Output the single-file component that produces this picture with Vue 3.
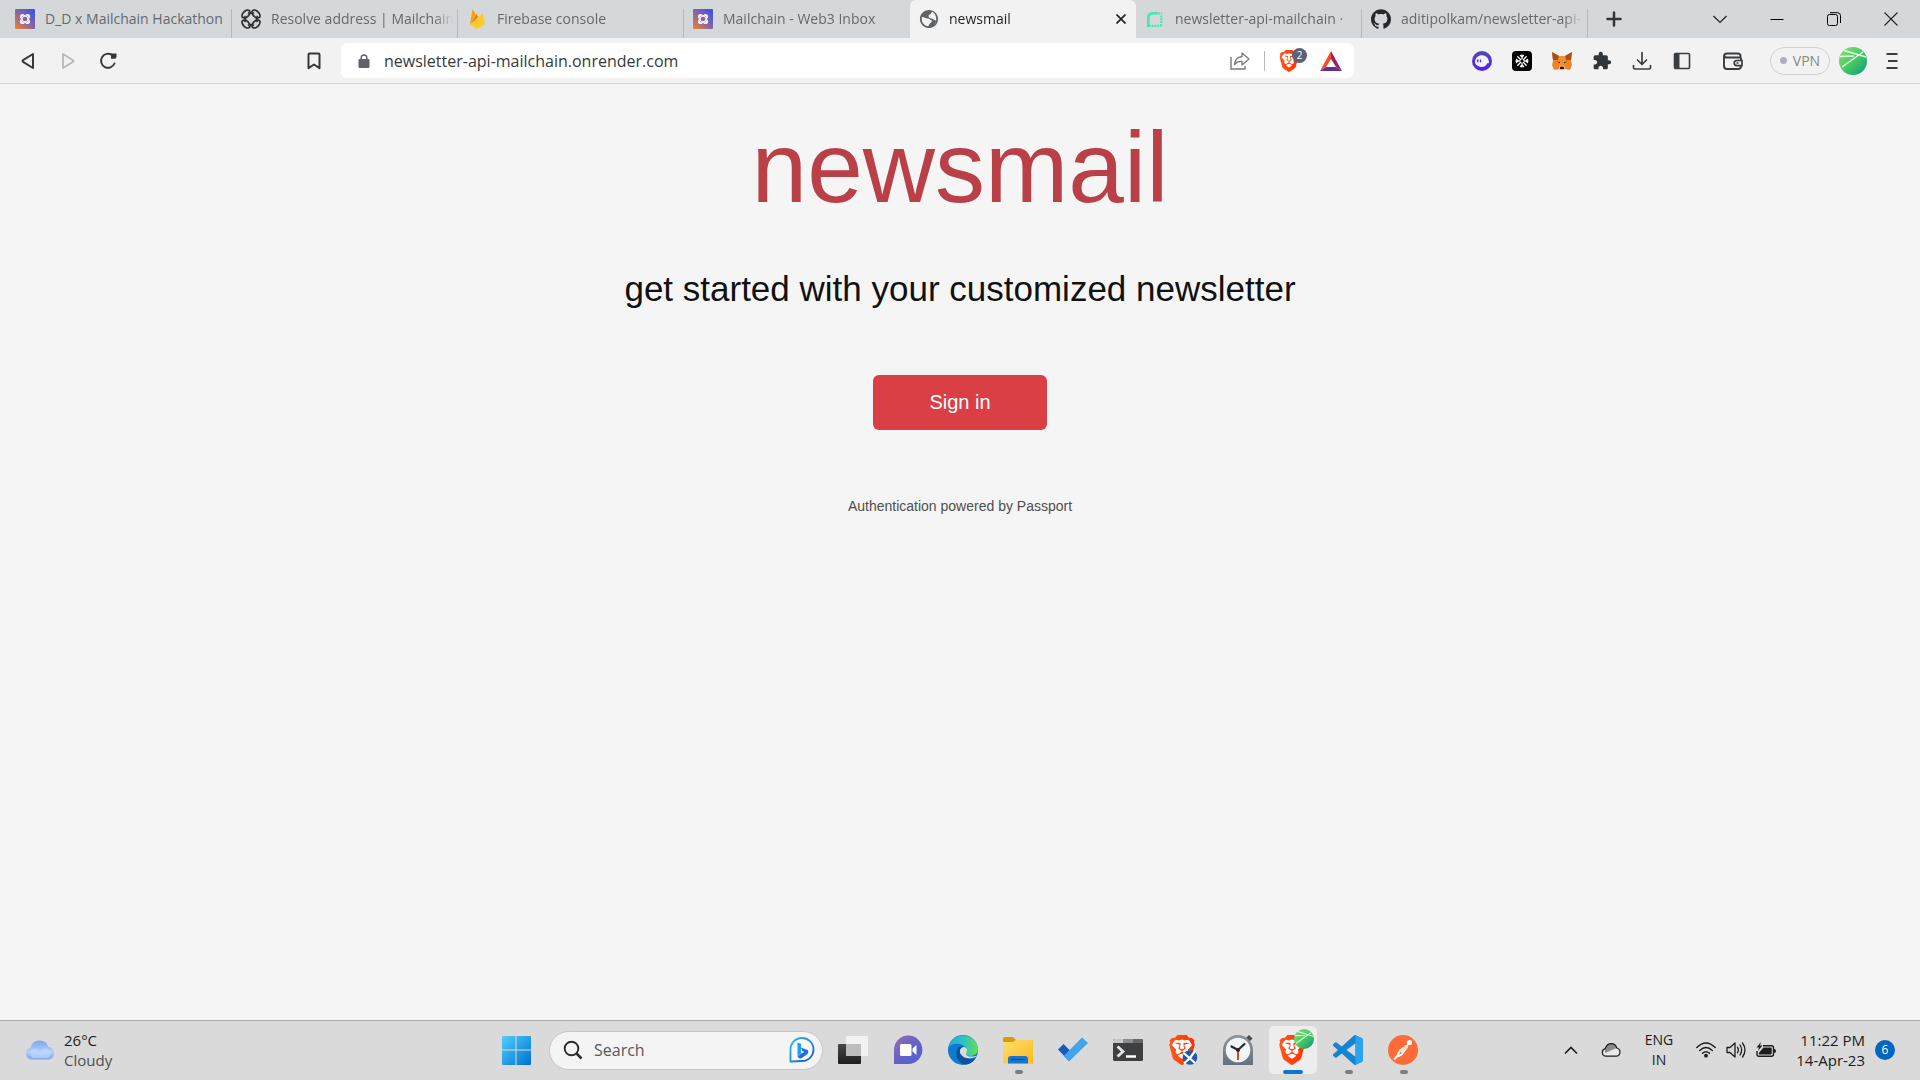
<script setup>
import { ref } from 'vue'

const tabs = [
  { title: 'D_D x Mailchain Hackathon', icon: 'mailchain' },
  { title: 'Resolve address | Mailchain', icon: 'knot' },
  { title: 'Firebase console', icon: 'firebase' },
  { title: 'Mailchain - Web3 Inbox', icon: 'mailchain' },
  { title: 'newsmail', icon: 'globe', active: true },
  { title: 'newsletter-api-mailchain ·', icon: 'render' },
  { title: 'aditipolkam/newsletter-api-', icon: 'github' },
]

const extensions = [
  { name: 'Phantom', icon: 'phantom' },
  { name: 'Keplr', icon: 'snow' },
  { name: 'MetaMask', icon: 'fox' },
  { name: 'Extensions', icon: 'puzzle' },
  { name: 'Downloads', icon: 'download' },
  { name: 'Sidebar', icon: 'sidebar' },
]

const apps = [
  { name: 'Task view', icon: 'taskview' },
  { name: 'Chat', icon: 'chat' },
  { name: 'Edge', icon: 'edge' },
  { name: 'File Explorer', icon: 'folder', open: true },
  { name: 'To Do', icon: 'todo' },
  { name: 'Terminal', icon: 'terminal' },
  { name: 'Brave work', icon: 'brave-work' },
  { name: 'Clock', icon: 'clock' },
  { name: 'Brave', icon: 'brave-user', current: true },
  { name: 'Visual Studio Code', icon: 'vscode', open: true },
  { name: 'Postman', icon: 'postman', open: true },
]

const address = ref('newsletter-api-mailchain.onrender.com')
const query = ref('')
</script>

<template>
  <div class="screen">
    <svg class="defs" aria-hidden="true">
      <defs>
        <linearGradient id="g-mail" x1="0" y1="1" x2="1" y2="0">
          <stop offset="0" stop-color="#f5812e" /><stop offset=".5" stop-color="#8566a0" /><stop offset="1" stop-color="#3450f0" />
        </linearGradient>
        <linearGradient id="g-brave" x1="0" y1="0" x2="1" y2="0">
          <stop offset="0" stop-color="#ff5a1f" /><stop offset="1" stop-color="#ff2f00" />
        </linearGradient>
        <linearGradient id="g-win" x1="0" y1="0" x2="1" y2="1">
          <stop offset="0" stop-color="#4fd0ff" /><stop offset="1" stop-color="#0070d0" />
        </linearGradient>
        <linearGradient id="g-cloud" x1="0" y1="0" x2="0" y2="1">
          <stop offset="0" stop-color="#79a5ee" /><stop offset=".6" stop-color="#b5d0fa" /><stop offset="1" stop-color="#7ba6ee" />
        </linearGradient>
        <linearGradient id="g-green" x1="0" y1="0" x2="1" y2="1">
          <stop offset="0" stop-color="#8fe07a" /><stop offset=".5" stop-color="#45cc62" /><stop offset="1" stop-color="#0c9384" />
        </linearGradient>
        <linearGradient id="g-phantom" x1="0" y1="0" x2="0" y2="1">
          <stop offset="0" stop-color="#534bb1" /><stop offset="1" stop-color="#551bf9" />
        </linearGradient>
        <linearGradient id="g-bing" x1="0" y1="0" x2="1" y2="1">
          <stop offset="0" stop-color="#25c5f0" /><stop offset="1" stop-color="#1d4fd0" />
        </linearGradient>
        <linearGradient id="g-chat" x1="0" y1="0" x2="1" y2="1">
          <stop offset="0" stop-color="#9a6bb0" /><stop offset=".5" stop-color="#6264c8" /><stop offset="1" stop-color="#5560d0" />
        </linearGradient>
        <linearGradient id="g-edge" x1="0" y1="0" x2="1" y2="0">
          <stop offset="0" stop-color="#2aa7dc" /><stop offset=".5" stop-color="#2bc3c8" /><stop offset="1" stop-color="#66e04c" />
        </linearGradient>
        <linearGradient id="g-folder" x1="0" y1="0" x2="1" y2="1">
          <stop offset="0" stop-color="#ffdd73" /><stop offset="1" stop-color="#fdbb17" />
        </linearGradient>
        <linearGradient id="g-dark" x1="0" y1="0" x2="0" y2="1">
          <stop offset="0" stop-color="#474747" /><stop offset="1" stop-color="#1e1e1e" />
        </linearGradient>
        <linearGradient id="g-clock" x1="0" y1="0" x2="0" y2="1">
          <stop offset="0" stop-color="#8b959e" /><stop offset="1" stop-color="#66717b" />
        </linearGradient>
      </defs>

      <symbol id="knot" viewBox="0 0 20 20">
        <g fill="none" stroke="currentColor" stroke-width="1.700">
          <ellipse cx="5" cy="5" rx="4.800" ry="2.900" transform="rotate(-45 5 5)" />
          <ellipse cx="15" cy="5" rx="4.800" ry="2.900" transform="rotate(45 15 5)" />
          <ellipse cx="5" cy="15" rx="4.800" ry="2.900" transform="rotate(45 5 15)" />
          <ellipse cx="15" cy="15" rx="4.800" ry="2.900" transform="rotate(-45 15 15)" />
          <path d="M7 3.500Q10 5.500 13 3.500M7 16.500Q10 14.500 13 16.500M3.500 7Q5.500 10 3.500 13M16.500 7Q14.500 10 16.500 13" />
        </g>
      </symbol>
      <symbol id="mailchain" viewBox="0 0 20 20">
        <rect width="20" height="20" rx="1" fill="url(#g-mail)" />
        <g fill="#f6eef8">
          <circle cx="7.500" cy="7.500" r="2.600" /><circle cx="12.500" cy="7.500" r="2.600" />
          <circle cx="7.500" cy="12.500" r="2.600" /><circle cx="12.500" cy="12.500" r="2.600" />
        </g>
        <circle cx="10" cy="10" r="3.300" fill="none" stroke="#f6eef8" stroke-width="1.200" />
        <circle cx="10" cy="10" r="2.300" fill="#8565a6" />
        <path d="M6.800 8.200l1.400-1.400M13.200 8.200l-1.400-1.400M6.800 11.800l1.400 1.400M13.200 11.800l-1.400 1.400" stroke="#a78bc0" stroke-width=".8" />
      </symbol>
      <symbol id="firebase" viewBox="0 0 20 20">
        <path d="M3 15.500L5.300.9q.3-.8.8-.1l2.400 4.500L3 15.500z" fill="#ffa000" />
        <path d="M11.500 8.700L9.500 4.700l-6.500 10.800 8.500-6.800z" fill="#f57c00" />
        <path d="M3 15.500l12-11q.6-.4.8.2l2.100 10.800-6.700 4q-1 .5-2 0L3 15.500z" fill="#ffca28" />
      </symbol>
      <symbol id="globe" viewBox="1 1 22 22">
        <path fill="#5f6368" d="M12 2C6.480 2 2 6.480 2 12s4.480 10 10 10 10-4.480 10-10S17.520 2 12 2zm-1 17.930c-3.950-.49-7-3.850-7-7.930 0-.62.08-1.210.21-1.790C6 9 8 12 11 11.500c2 0 2 2 4 2 1 2-2 3-3 5zm6.900-1.500c1-2 2-3 1.500-5-2 0-3-2-5-2-2-1-3-1-3-3 1-2 3-1 3.600-4.500C17.930 4.500 20 8.650 20 12c0 2.080-.8 4.970-2.100 6.430z" />
      </symbol>
      <symbol id="render" viewBox="0 0 20 20">
        <path d="M3.300 18V9q0-4.700 4.700-4.700h5" fill="none" stroke="#46e3b7" stroke-width="2.600" />
        <path d="M13.500 4.300H17M16.300 6.500V18M4 16.800h12" fill="none" stroke="#46e3b7" stroke-width="2.200" stroke-dasharray="1.800 1" />
      </symbol>
      <symbol id="github" viewBox="0 0 24 24">
        <path fill="#24292f" d="M12 .297c-6.630 0-12 5.373-12 12 0 5.303 3.438 9.800 8.205 11.385.6.113.82-.258.82-.577 0-.285-.01-1.040-.015-2.040-3.338.724-4.042-1.610-4.042-1.610C4.422 18.070 3.633 17.700 3.633 17.700c-1.087-.744.084-.729.084-.729 1.205.084 1.838 1.236 1.838 1.236 1.070 1.835 2.809 1.305 3.495.998.108-.776.417-1.305.76-1.605-2.665-.3-5.466-1.332-5.466-5.930 0-1.310.465-2.380 1.235-3.220-.135-.303-.54-1.523.105-3.176 0 0 1.005-.322 3.300 1.230.96-.267 1.980-.399 3-.405 1.020.006 2.040.138 3 .405 2.280-1.552 3.285-1.230 3.285-1.230.645 1.653.24 2.873.12 3.176.765.840 1.230 1.910 1.230 3.220 0 4.610-2.805 5.625-5.475 5.920.42.360.81 1.096.81 2.220 0 1.606-.015 2.896-.015 3.286 0 .315.21.69.825.57C20.565 22.092 24 17.592 24 12.297c0-6.627-5.373-12-12-12" />
      </symbol>
      <symbol id="close" viewBox="0 0 10 10"><path d="M.5.5l9 9M9.500.5l-9 9" fill="none" stroke="currentColor" stroke-width="1.700" /></symbol>
      <symbol id="plus" viewBox="0 0 16 16"><path d="M8 1.500v13M1.500 8h13" fill="none" stroke="#333638" stroke-width="2.500" stroke-linecap="round" /></symbol>
      <symbol id="down" viewBox="0 0 14 14"><path d="M.5 4L7 10.500 13.500 4" fill="none" stroke="#222" stroke-width="1.200" /></symbol>
      <symbol id="min" viewBox="0 0 14 14"><path d="M.5 7.500h13" stroke="#000" /></symbol>
      <symbol id="restore" viewBox="0 0 14 14">
        <rect x=".5" y="2.500" width="10" height="11" rx="2" fill="none" stroke="#000" />
        <path d="M3 .7h7.500q3 0 3 3V11" fill="none" stroke="#000" />
      </symbol>
      <symbol id="wclose" viewBox="0 0 14 14"><path d="M.5.5l13 13M13.500.5l-13 13" stroke="#222" stroke-width="1.100" /></symbol>

      <symbol id="back" viewBox="0 0 14 18"><path d="M12 2v14L2 9.800q-1-.8 0-1.600z" fill="none" stroke="currentColor" stroke-width="2" stroke-linejoin="round" /></symbol>
      <symbol id="forward" viewBox="0 0 14 18"><path d="M2 2v14l10-6.200q1-.8 0-1.600z" fill="none" stroke="currentColor" stroke-width="1.800" stroke-linejoin="round" /></symbol>
      <symbol id="reload" viewBox="0 0 18 18">
        <path d="M13 3a7 7 0 1 0 2.500 8.500" fill="none" stroke="currentColor" stroke-width="1.900" stroke-linecap="round" />
        <path d="M12 1.500h5.500v3.300q0 2-2 2H12z" fill="currentColor" />
      </symbol>
      <symbol id="bookmark" viewBox="0 0 14 18"><path d="M1.500 2.500q0-1 1-1h9q1 0 1 1v13.700L7 12.500l-5.500 3.700z" fill="none" stroke="currentColor" stroke-width="2" stroke-linejoin="round" /></symbol>
      <symbol id="lock" viewBox="0 0 12 14">
        <path d="M3.200 6V3.800a2.800 2.800 0 0 1 5.600 0V6" fill="none" stroke="#5f6368" stroke-width="1.500" />
        <rect x=".5" y="5" width="11" height="9" rx="1.300" fill="#5f6368" />
      </symbol>
      <symbol id="share" viewBox="0 0 20 18">
        <path d="M1 5v12h14v-3" fill="none" stroke="#77797c" stroke-width="1.400" />
        <path d="M12 1l7 6-7 6V9.500Q7 9 4.500 12.500 5 5.500 12 4.500z" fill="none" stroke="#77797c" stroke-width="1.300" stroke-linejoin="round" />
      </symbol>
      <symbol id="lion" viewBox="0 0 24 24">
        <path d="M5 4h14l1 5-3 9-5 3-5-3-3-9z" fill="#fff" />
        <path fill="url(#g-brave)" d="M15.680 0l2.096 2.380s1.840-.512 2.709.358c.868.870 1.584 1.638 1.584 1.638l-.562 1.381.715 2.047s-2.104 7.980-2.350 8.955c-.486 1.919-.818 2.660-2.198 3.633-1.380.972-3.884 2.660-4.293 2.916-.409.256-.92.692-1.380.692-.46 0-.97-.436-1.380-.692a185.796 185.796 0 01-4.293-2.916c-1.380-.973-1.712-1.714-2.197-3.633-.247-.975-2.351-8.955-2.351-8.955l.715-2.047-.562-1.381s.716-.768 1.585-1.638c.868-.870 2.708-.358 2.708-.358L8.321 0h7.360zm-3.679 14.936c-.14 0-1.038.317-1.758.690-.72.373-1.242.637-1.409.742-.167.104-.065.301.087.409.152.107 2.194 1.690 2.393 1.866.198.175.489.464.687.464.198 0 .49-.29.688-.464.198-.175 2.240-1.759 2.392-1.866.152-.108.254-.305.087-.41-.167-.104-.689-.368-1.410-.741-.72-.373-1.617-.69-1.757-.69zm0-11.278s-.409.001-1.022.206-1.278.460-1.584.460c-.307 0-2.581-.434-2.581-.434S4.119 7.152 4.119 7.849c0 .697.339.881.680 1.243l2.020 2.149c.192.203.590.511.356 1.066-.235.555-.58 1.260-.196 1.977.384.716 1.042 1.194 1.464 1.115.421-.08 1.412-.598 1.776-.834.364-.237 1.518-1.190 1.518-1.554 0-.365-1.193-1.020-1.413-1.168-.22-.15-1.226-.725-1.247-.95-.02-.227-.012-.293.284-.851.297-.559.831-1.304.742-1.800-.089-.495-.95-.753-1.565-.986-.615-.232-1.799-.671-1.947-.74-.148-.068-.11-.133.339-.175.448-.043 1.719-.212 2.292-.052.573.160 1.552.403 1.632.532.079.130.149.134.067.579-.081.445-.5 2.581-.541 2.960-.04.380-.12.630.288.724.409.094 1.097.256 1.333.256s.924-.162 1.333-.256c.408-.093.329-.344.288-.723-.04-.38-.46-2.516-.541-2.961-.082-.445-.012-.45.067-.579.080-.129 1.059-.372 1.632-.532.573-.16 1.845.009 2.292.052.449.042.487.107.339.175-.148.069-1.332.508-1.947.740-.615.233-1.476.490-1.565.986-.09.496.445 1.241.742 1.800.297.558.304.624.284.850-.02.226-1.026.802-1.247.950-.22.150-1.413.804-1.413 1.169 0 .364 1.154 1.317 1.518 1.554.364.236 1.355.755 1.776.834.422.079 1.080-.4 1.464-1.115.384-.716.039-1.422-.195-1.977-.235-.555.163-.863.355-1.066l2.020-2.149c.341-.362.680-.546.680-1.243 0-.697-2.695-3.960-2.695-3.960s-2.274.436-2.580.436c-.307 0-.972-.256-1.585-.461-.613-.205-1.022-.206-1.022-.206z" />
      </symbol>
      <symbol id="bat" viewBox="0 0 22 20">
        <path d="M11 0L0 20l6-4 5-8z" fill="#ff4724" />
        <path d="M11 0l11 20-6-4-5-8z" fill="#9e1f63" />
        <path d="M0 20h22l-6-4H6z" fill="#662d91" />
      </symbol>
      <symbol id="phantom" viewBox="0 0 20 20">
        <circle cx="10" cy="10" r="10" fill="url(#g-phantom)" />
        <path d="M3 11C3.300 6.500 6.500 4.200 10 4.200c4.200 0 6.800 3.300 7 6.800.1 1.300-.8 1.400-1.800 1.300-.7 2.700-3.400 4-6.200 3.700C5.500 15.500 3 13.500 3 11z" fill="#f3f0ff" />
        <path d="M5.700 8.500v2.800M8.500 8.500v2.800" stroke="#5137d5" stroke-width="1.400" />
      </symbol>
      <symbol id="snow" viewBox="0 0 20 20">
        <rect width="20" height="20" rx="4" />
        <g fill="none" stroke="#fff" stroke-width="1.300" stroke-linecap="round">
          <path d="M10 4v4M10 12v4M4 10h4M12 10h4M5.800 5.800l2.700 2.700M11.500 11.500l2.700 2.700M14.200 5.800l-2.700 2.700M8.500 11.500l-2.700 2.700M8.500 4.500L10 6l1.500-1.500M8.500 15.500L10 14l1.500 1.500M4.500 8.500L6 10l-1.500 1.500M15.500 8.500L14 10l1.500 1.500" />
        </g>
      </symbol>
      <symbol id="fox" viewBox="0 0 20 20">
        <path d="M0 1l7 4h6l7-4-1 9 1 4-2 5-5-1-2 1H9l-2-1-5 1-2-5 1-4z" fill="#f08327" />
        <path d="M0 1l7 4-1 4-5 0zM20 1l-7 4 1 4 5 0z" fill="#a5521a" />
        <path d="M7 5h6l1 5-1 5H7l-1-5z" fill="#f6902e" />
        <path d="M5 10.500l3 .5v1.500zM15 10.500l-3 .5v1.500z" fill="#233447" />
        <path d="M7 15l2 1h2l2-1v3l-2 1.500H9L7 18z" fill="#d8c5b5" /><path d="M8 16h4v2H8z" fill="#1c1715" />
      </symbol>
      <symbol id="puzzle" viewBox="0 0 24 24">
        <path fill="#333638" d="M20.500 11H19V7c0-1.100-.9-2-2-2h-4V3.500C13 2.120 11.880 1 10.500 1S8 2.120 8 3.500V5H4c-1.100 0-1.990.9-1.990 2v3.800H3.500c1.490 0 2.700 1.210 2.700 2.700s-1.210 2.700-2.700 2.700H2V20c0 1.100.9 2 2 2h3.800v-1.500c0-1.490 1.210-2.700 2.700-2.700 1.490 0 2.700 1.210 2.700 2.700V22H17c1.100 0 2-.9 2-2v-4h1.500c1.380 0 2.500-1.120 2.500-2.500S21.880 11 20.500 11z" />
      </symbol>
      <symbol id="download" viewBox="0 0 20 20">
        <path d="M10 1.500v11.500M5.500 9L10 13.500 14.500 9M1.500 14.500v2q0 1.500 1.500 1.500h14q1.500 0 1.500-1.500v-2" fill="none" stroke="#3a3d40" stroke-width="1.700" stroke-linecap="round" stroke-linejoin="round" />
      </symbol>
      <symbol id="sidebar" viewBox="0 0 20 20">
        <rect x="2.500" y="2.500" width="15" height="15" rx="1" fill="none" stroke="#3a3d40" stroke-width="1.600" /><path d="M2.500 2.500h5v15h-5z" fill="#3a3d40" />
      </symbol>
      <symbol id="wallet" viewBox="0 0 20 18">
        <path d="M17.500 6V4q0-2.500-2.500-2.500H4Q1 1.500 1 4v10q0 3 3 3h11q3 0 3-3V6.500q0-1-1-1H4Q1.500 5.500 1.200 3.500" fill="none" stroke="#3a3d40" stroke-width="1.900" />
        <path d="M19 8.500h-5q-2.800 0-2.800 2.600t2.800 2.600h5z" fill="#f2f2f2" stroke="#3a3d40" stroke-width="1.700" />
        <path d="M13.500 11h2" stroke="#3a3d40" stroke-width="1.500" />
      </symbol>
      <symbol id="avatar" viewBox="0 0 28 28">
        <circle cx="14" cy="14" r="14" fill="url(#g-green)" />
        <path d="M5 3.500l22 6.500M3 20L24 5M1 9.500L15 9" stroke="#e9fbea" stroke-width="1.500" fill="none" />
      </symbol>
      <symbol id="menu" viewBox="0 0 12 18"><path d="M.5 2h11M2 9h9.500M.5 16h11" stroke="#3a3d40" stroke-width="2" /></symbol>

      <symbol id="weather" viewBox="0 0 30 20">
        <path d="M6 19.500a6 6 0 0 1-.5-11.800Q7.500.5 14.500.5t8.800 6.300A6.400 6.400 0 0 1 24 19.500z" fill="url(#g-cloud)" />
        <path d="M8 18a5 5 0 0 1 0-9q5-1 7 4 3-6 8-4a5 5 0 0 1 0 9z" fill="#c3dafc" opacity=".6" />
      </symbol>
      <symbol id="windows" viewBox="0 0 30 30">
        <path d="M2 1h12.500v13.500H1V2q0-1 1-1zM15.500 1H29q1 0 1 1v12.500H15.500zM1 15.500h13.500V30H2q-1 0-1-1zM15.500 15.500H30V29q0 1-1 1H15.500z" fill="url(#g-win)" />
      </symbol>
      <symbol id="search" viewBox="0 0 20 20">
        <circle cx="8.500" cy="8.500" r="6.800" fill="none" stroke="#2b2b2b" stroke-width="1.900" /><path d="M13.500 13.500l5 5" stroke="#2b2b2b" stroke-width="2.500" />
      </symbol>
      <symbol id="bing" viewBox="0 0 26 26">
        <path d="M1.500 24.500V13A11.500 11.500 0 1 1 13 24z" fill="#f7fbff" stroke="url(#g-bing)" stroke-width="1.800" stroke-linejoin="round" />
        <path d="M8.500 5.500l3.500 1.300v9.500l-3.500 3z" fill="#1aa0ee" />
        <path d="M8.500 19.500l3.500-3 3.500-1.500-2.300-1-1.200-3.500 7 2.800q1 2.200-.7 4L12 21.500q-2.500 0-3.500-2z" fill="#2468e8" />
      </symbol>
      <symbol id="taskview" viewBox="0 0 30 30">
        <rect y="9" width="23" height="20" rx="1" fill="url(#g-dark)" />
        <rect x="8" y="1" width="22" height="20" rx="1" fill="#f2f2f2" />
        <rect x="8" y="9" width="15" height="12" fill="#bdbdbd" />
      </symbol>
      <symbol id="chat" viewBox="0 0 30 30">
        <path d="M1 29V15A14.200 14.200 0 1 1 15 29z" fill="url(#g-chat)" />
        <rect x="7" y="9" width="11.500" height="12" rx="1.500" fill="#fff" /><path d="M19.500 13.500l4-3.500v10l-4-3.500z" fill="#fff" />
      </symbol>
      <symbol id="edge" viewBox="0 0 30 30">
        <circle cx="15" cy="15" r="15" fill="#0c7bd0" />
        <path d="M.3 13A15 15 0 0 1 30 14c0 5-4 7-8 7-3 0-4.500-1-4-2.500 1.500-3 0-8-6-9.500C7 8 2 9 .3 13z" fill="url(#g-edge)" />
        <path d="M10 13c-4 6 0 17 9 16.400 4-.8 7-3.400 9-6.900-5 3-13 2-15-4-.7-3 .5-5.500 3-6.700-2-.6-4.500-.3-6 1.200z" fill="#104f9a" />
        <path d="M14.500 12.200c-3 1.500-3.200 5-1.500 7.300 3 4 9 5 14.500 2.500l1.400-1.400C26 22 20 22 18.500 20c-1.200-1.500 1-3 .5-5-.5-1.800-2-3.500-4.500-2.800z" fill="#dadada" />
      </symbol>
      <symbol id="folder" viewBox="0 0 30 30">
        <path d="M0 4q0-2 2-2h8l3 3h15q2 0 2 2v8H0z" fill="#dc9a06" />
        <path d="M0 7h10l3-2h15q2 0 2 2v21.500H0z" fill="url(#g-folder)" />
        <path d="M5 28.500V24q0-3 3-3h14q3 0 3 3v4.500z" fill="#1478d0" /><path d="M8 24.500h14" stroke="#094b91" stroke-width="1.300" />
      </symbol>
      <symbol id="todo" viewBox="0 0 30 30">
        <path d="M0 14.500L5.500 9l11 11-5.500 6z" fill="#185abd" /><path d="M11 26.500L5.700 21 24 2.500l6 5.500z" fill="#41a5ee" />
      </symbol>
      <symbol id="terminal" viewBox="0 0 30 30">
        <rect y="4" width="30" height="22" rx="1.500" fill="#3d3f41" /><path d="M0 8V5.500Q0 4 1.500 4H10v4z" fill="#c8c8c8" /><path d="M10 4h10v4H10z" fill="#8d8d8d" /><path d="M20 4h8.500Q30 4 30 5.500V8H20z" fill="#666" />
        <path d="M4.500 11.500l5.500 5-5.500 5" fill="none" stroke="#e4e4e4" stroke-width="2.800" /><path d="M13 21.500h10" stroke="#fff" stroke-width="2.500" />
      </symbol>
      <symbol id="brave-work" viewBox="0 0 30 30">
        <use href="#lion" x="-1" y="0" width="30" height="30" />
        <circle cx="22" cy="22.500" r="7.300" fill="#2459a8" /><path d="M15.500 18l6 5 5.500 5M16 28.500l6-5.500 5-7" stroke="#fff" stroke-width="2.200" fill="none" />
      </symbol>
      <symbol id="clock" viewBox="0 0 30 30">
        <path d="M23 3l3-3 3.500 3.500-3 3z" fill="#444d55" />
        <path d="M0 30V15a15 15 0 0 1 30 0v15z" fill="url(#g-clock)" />
        <circle cx="15" cy="15" r="12.300" fill="#f3f4f5" />
        <path d="M15 15v10" stroke="#da4b12" stroke-width="2" /><path d="M8.500 11.500L15 15l6.500-6" fill="none" stroke="#24292e" stroke-width="2.200" stroke-linecap="round" />
        <circle cx="15" cy="15" r="2" fill="#24292e" />
      </symbol>
      <symbol id="brave-user" viewBox="0 0 36 36">
        <use href="#lion" x="-1" y="6" width="30" height="30" />
        <use href="#avatar" x="16" y="0" width="20" height="20" />
      </symbol>
      <symbol id="vscode" viewBox="0 0 24 24">
        <path fill="#1585d2" d="M23.150 2.587L18.210.210a1.494 1.494 0 0 0-1.705.290l-9.460 8.630-4.120-3.128a.999.999 0 0 0-1.276.057L.327 7.261A1 1 0 0 0 .326 8.740L3.899 12 .326 15.260a1 1 0 0 0 .001 1.479L1.650 17.940a.999.999 0 0 0 1.276.057l4.120-3.128 9.460 8.630a1.492 1.492 0 0 0 1.704.290l4.942-2.377A1.500 1.500 0 0 0 24 20.060V3.939a1.500 1.500 0 0 0-.85-1.352zm-5.146 14.861L10.826 12l7.178-5.448v10.896z" />
        <path fill="#2ba3f0" d="M18 .1l5.150 2.487A1.500 1.500 0 0 1 24 3.939V20.060a1.500 1.500 0 0 1-.85 1.352L18 23.900z" />
      </symbol>
      <symbol id="postman" viewBox="0 0 30 30">
        <circle cx="15" cy="15" r="15" fill="#ff6c37" />
        <circle cx="21.500" cy="7.500" r="2.600" fill="#fff" />
        <path d="M20 10l-8 5.500-3 6-3 3M19.500 11.500l-6 8-3.500 2" fill="none" stroke="#fff" stroke-width="2" /><path d="M19 11l-6 6" stroke="#ffd8c8" stroke-width="3" />
      </symbol>
      <symbol id="up" viewBox="0 0 14 14"><path d="M1 10.500l6-6 6 6" fill="none" stroke="#1c1c1c" stroke-width="1.600" /></symbol>
      <symbol id="onedrive" viewBox="0 0 20 14">
        <path d="M4.500 13.200a3.900 3.900 0 0 1-.3-7.600Q6 .7 10.300.7t5.500 4.300a4.200 4.200 0 0 1-.3 8.200z" fill="#e9e9e9" />
        <path d="M4 5.800Q6 .7 10.300.7t5.500 4.300L4 10z" fill="#8b8b8b" />
        <path d="M4.500 13.200a3.900 3.900 0 0 1-.3-7.600Q6 .7 10.300.7t5.500 4.300a4.200 4.200 0 0 1-.3 8.200z" fill="none" stroke="#1c1c1c" stroke-width="1.200" />
      </symbol>
      <symbol id="wifi" viewBox="0 0 20 16">
        <g fill="none" stroke="#1c1c1c" stroke-width="1.400" stroke-linecap="round"><path d="M.8 5.500q9.200-9 18.400 0M3.700 8.500q6.300-6 12.600 0M6.500 11.300q3.500-3.300 7 0" /></g><circle cx="10" cy="13.700" r="1.900" fill="#1c1c1c" />
      </symbol>
      <symbol id="volume" viewBox="0 0 20 18">
        <g fill="none" stroke="#1c1c1c" stroke-width="1.300" stroke-linecap="round" stroke-linejoin="round"><path d="M1 6.500h3L9 2v14l-5-4.500H1zM11.500 6.300q1.800 2.700 0 5.400M14 4q3.200 5 0 10M16.500 2q5 7 0 14" /></g>
      </symbol>
      <symbol id="battery" viewBox="0 0 20 16">
        <path d="M7 3.700h8.500q2 0 2 2v6.600q0 2-2 2H3q-2 0-2-2V9" fill="none" stroke="#1c1c1c" stroke-width="1.400" />
        <path d="M7.500 5.500h7q1.200 0 1.200 1.200v4.600q0 1.200-1.200 1.200H3.500Q2.800 12.500 2.800 11z" fill="#1c1c1c" /><path d="M18 7q2 0 2 2t-2 2z" fill="#1c1c1c" />
        <path d="M5 0L.5 5.500H3L2 9l4.500-5.500H4z" fill="#1c1c1c" />
      </symbol>
    </svg>

    <header class="browser">
      <div class="tabstrip">
        <div v-for="(tab, i) in tabs" :key="i" class="tab" :class="{ active: tab.active, bare: tabs[i + 1]?.active }">
          <button class="tab-button">
            <svg class="s20 knot"><use :href="'#' + tab.icon" /></svg>
            <span class="tab-title">{{ tab.title }}</span>
          </button>
          <button v-if="tab.active" class="tab-close" aria-label="Close tab"><svg class="s10"><use href="#close" /></svg></button>
        </div>
        <button class="new-tab" aria-label="New tab"><svg class="s16"><use href="#plus" /></svg></button>
        <div class="window-controls">
          <button aria-label="Search tabs"><svg class="s14"><use href="#down" /></svg></button>
          <button aria-label="Minimise"><svg class="s14"><use href="#min" /></svg></button>
          <button aria-label="Restore"><svg class="s14"><use href="#restore" /></svg></button>
          <button aria-label="Close window"><svg class="s14"><use href="#wclose" /></svg></button>
        </div>
      </div>

      <div class="toolbar">
        <nav class="nav">
          <button aria-label="Back"><svg class="tall"><use href="#back" /></svg></button>
          <button aria-label="Forward" disabled><svg class="tall"><use href="#forward" /></svg></button>
          <button aria-label="Reload"><svg class="s18"><use href="#reload" /></svg></button>
        </nav>
        <button class="mark" aria-label="Bookmark"><svg class="tall"><use href="#bookmark" /></svg></button>
        <div class="address">
          <svg class="lock"><use href="#lock" /></svg>
          <input v-model="address" type="text" aria-label="Address" />
          <button aria-label="Share"><svg class="s20"><use href="#share" /></svg></button>
          <span class="rule"></span>
          <button class="shield" aria-label="Shields"><svg class="s22"><use href="#lion" /></svg><span class="count">2</span></button>
          <button class="rewards" aria-label="Rewards"><svg class="s22"><use href="#bat" /></svg></button>
        </div>
        <div class="extensions">
          <button v-for="e in extensions" :key="e.name" :aria-label="e.name"><svg class="s20"><use :href="'#' + e.icon" /></svg></button>
          <button class="wallet" aria-label="Wallet"><svg class="s20"><use href="#wallet" /></svg></button>
          <button class="vpn"><span class="dot"></span>VPN</button>
          <button class="profile" aria-label="Profile"><svg class="s28"><use href="#avatar" /></svg></button>
          <button class="menu" aria-label="Menu"><svg class="bars"><use href="#menu" /></svg></button>
        </div>
      </div>
    </header>

    <main class="page">
      <h1>newsmail</h1>
      <p class="lead">get started with your customized newsletter</p>
      <button class="signin">Sign in</button>
      <p class="credit">Authentication powered by Passport</p>
    </main>

    <footer class="taskbar">
      <div class="side">
        <button class="weather">
          <svg><use href="#weather" /></svg>
          <span class="lines"><span>26°C</span><span class="dim">Cloudy</span></span>
        </button>
      </div>
      <div class="dock">
        <button class="app" aria-label="Start"><svg class="s30"><use href="#windows" /></svg></button>
        <label class="search">
          <svg class="s20"><use href="#search" /></svg>
          <input v-model="query" type="text" placeholder="Search" aria-label="Search" />
          <svg class="s26"><use href="#bing" /></svg>
        </label>
        <button v-for="a in apps" :key="a.name" class="app" :class="{ open: a.open, current: a.current }" :aria-label="a.name">
          <svg :class="a.current ? 's36' : 's30'"><use :href="'#' + a.icon" /></svg>
        </button>
      </div>
      <div class="side tray">
        <button class="hidden-icons" aria-label="Hidden icons"><svg class="s14"><use href="#up" /></svg></button>
        <button class="drive" aria-label="OneDrive"><svg class="s20"><use href="#onedrive" /></svg></button>
        <button class="lines lang"><span>ENG</span><span>IN</span></button>
        <button class="status" aria-label="Quick settings">
          <svg class="s20"><use href="#wifi" /></svg><svg class="s20"><use href="#volume" /></svg><svg class="s20"><use href="#battery" /></svg>
        </button>
        <button class="lines time"><span>11:22 PM</span><span>14-Apr-23</span></button>
        <span class="notices">6</span>
      </div>
    </footer>
  </div>
</template>

<style>
body {
  margin: 0;
}
</style>

<style scoped>
.screen {
  display: flex;
  flex-direction: column;
  min-height: 100vh;
  background: #f5f5f5;
  font-family: "Open Sans", "Noto Sans", sans-serif;
  font-size: 14px;
  color: #1c1c1c;
}
.defs {
  position: absolute;
  width: 0;
  height: 0;
}
svg {
  display: block;
  flex: none;
}
button,
input {
  margin: 0;
  padding: 0;
  border: 0;
  background: none;
  font: inherit;
  color: inherit;
  outline: none;
}
button {
  display: flex;
  align-items: center;
  justify-content: center;
}
.s10 { width: 10px; height: 10px; }
.s14 { width: 14px; height: 14px; }
.s16 { width: 16px; height: 16px; }
.s18 { width: 18px; height: 18px; }
.s20 { width: 20px; height: 20px; }
.s22 { width: 22px; height: 22px; }
.s26 { width: 26px; height: 26px; }
.s28 { width: 28px; height: 28px; }
.s30 { width: 30px; height: 30px; }
.s36 { width: 36px; height: 36px; }
.tall { width: 14px; height: 18px; }
.bars { width: 12px; height: 18px; }

.tabstrip {
  display: flex;
  height: 38px;
  padding-left: 6px;
  background: #d4d8db;
}
.tab {
  box-sizing: border-box;
  position: relative;
  display: flex;
  flex: 0 1 226px;
  min-width: 0;
  color: #66696c;
}
.tab::after {
  content: "";
  position: absolute;
  right: 0;
  top: 9px;
  bottom: 0;
  width: 1px;
  background: #b5b9bc;
}
.tab.active::after,
.tab.bare::after {
  display: none;
}
.tab.active {
  background: #f2f2f2;
  border-radius: 6px 6px 0 0;
  color: #1f2123;
}
.tab-button {
  flex: 1;
  min-width: 0;
  gap: 10px;
  padding: 0 4px 0 9px;
  justify-content: flex-start;
}
.knot {
  color: #2b2d30;
}
.tab-title {
  flex: 1;
  overflow: hidden;
  padding-bottom: 2px;
  white-space: nowrap;
  text-align: left;
  mask-image: linear-gradient(to right, #000 calc(100% - 20px), transparent);
}
.tab:first-child .tab-title {
  mask-image: none;
}
.tab-close {
  width: 30px;
}
.new-tab {
  width: 51px;
}
.window-controls {
  display: flex;
  margin: 0 1px 0 auto;
}
.window-controls button {
  width: 57px;
}

.toolbar {
  display: flex;
  align-items: center;
  height: 45px;
  background: #f2f2f2;
  border-bottom: 1px solid #d4d6d8;
  color: #36393c;
}
.nav {
  display: flex;
  padding-left: 8px;
}
.nav button {
  width: 40px;
  height: 36px;
}
.nav button:disabled {
  color: #b6b8ba;
}
.mark {
  width: 40px;
  margin-left: 166px;
}
.address {
  display: flex;
  align-items: center;
  flex: 1;
  height: 35px;
  margin-left: 7px;
  padding: 0 12px 0 17px;
  border-radius: 6px;
  background: #fff;
}
.lock {
  width: 12px;
  height: 14px;
}
.address input {
  flex: 1;
  min-width: 0;
  margin-left: 14px;
  font-size: 16px;
  color: #36393c;
}
.rule {
  width: 1px;
  height: 20px;
  margin: 0 13px 0 14px;
  background: #b9bbbd;
}
.shield {
  position: relative;
}
.count {
  position: absolute;
  left: 14px;
  top: -2px;
  width: 15px;
  height: 15px;
  border-radius: 8px;
  background: #5e6175;
  color: #fff;
  font-size: 10px;
  line-height: 15px;
  text-align: center;
}
.rewards {
  margin-left: 20px;
}
.extensions {
  display: flex;
  align-items: center;
  padding-left: 108px;
}
.extensions button {
  width: 40px;
}
.extensions .wallet {
  margin-left: 11px;
}
.extensions .vpn {
  box-sizing: border-box;
  width: 60px;
  height: 28px;
  margin-left: 17px;
  gap: 6px;
  border: 1px solid #cfd1d4;
  border-radius: 14px;
  color: #85898d;
}
.dot {
  width: 7px;
  height: 7px;
  border-radius: 50%;
  background: #adafc0;
}
.extensions .profile {
  width: 46px;
}
.extensions .menu {
  width: 32px;
  margin-right: 12px;
}

.page {
  flex: 1;
  display: flex;
  flex-direction: column;
  align-items: center;
  font-family: "Liberation Sans", Arial, sans-serif;
}
h1 {
  margin: 23px 0 0;
  font-size: 100px;
  font-weight: 400;
  line-height: 120px;
  color: #b94047;
}
.lead {
  margin: 41px 0 0;
  font-size: 35px;
  line-height: 42px;
  color: #111;
}
.signin {
  width: 174px;
  height: 55px;
  margin-top: 65px;
  border-radius: 6px;
  background: #d93f45;
  color: #fff;
  font-size: 20px;
}
.credit {
  margin: 68px 0 0;
  font-size: 14px;
  line-height: 16px;
  color: #4f4f4f;
}

.taskbar {
  box-sizing: border-box;
  display: flex;
  height: 60px;
  padding-bottom: 1px;
  border-top: 1px solid #adadad;
  background: #dadada;
}
.side {
  flex: 1 1 0;
  display: flex;
  padding-bottom: 1px;
}
.lines {
  display: flex;
  flex-direction: column;
  font-size: 15px;
  line-height: 20px;
}
.weather {
  gap: 9px;
  padding-left: 25px;
}
.weather svg {
  width: 30px;
  height: 20px;
}
.weather .lines {
  text-align: left;
}
.dim {
  color: #505050;
}
.dock {
  display: flex;
  align-items: center;
}
.app {
  box-sizing: border-box;
  position: relative;
  width: 55px;
  height: 48px;
  padding-right: 1px;
}
.app.current {
  width: 48px;
  margin: 0 4px 0 3px;
  padding: 0 0 6px 6px;
  border-radius: 5px;
  background: #ededed;
}
.app.open::after,
.app.current::after {
  content: "";
  position: absolute;
  left: 50%;
  bottom: 0;
  width: 8px;
  height: 4px;
  margin-left: -4px;
  border-radius: 2px;
  background: #7d7d7d;
}
.app.current::after {
  width: 20px;
  margin-left: -10px;
  background: #0a78d4;
}
.search {
  box-sizing: border-box;
  display: flex;
  align-items: center;
  width: 274px;
  height: 39px;
  margin: 0 3px 0 5px;
  padding: 0 7px 0 13px;
  border: 1px solid #c6c6c6;
  border-radius: 20px;
  background: #f4f4f4;
}
.search input {
  flex: 1;
  min-width: 0;
  margin-left: 11px;
  font-size: 16px;
}
.search input::placeholder {
  color: #585858;
  opacity: 1;
}
.tray {
  justify-content: flex-end;
  align-items: center;
}
.tray .lang {
  width: 56px;
  font-size: 14px;
}
.hidden-icons {
  width: 40px;
}
.drive {
  width: 40px;
}
.status {
  gap: 10px;
  margin-left: 9px;
}
.time {
  width: 89px;
  align-items: flex-end;
}
.notices {
  width: 20px;
  height: 20px;
  margin: 0 25px 0 10px;
  border-radius: 50%;
  background: #0067c0;
  color: #fff;
  font-size: 12px;
  line-height: 20px;
  text-align: center;
}
</style>
